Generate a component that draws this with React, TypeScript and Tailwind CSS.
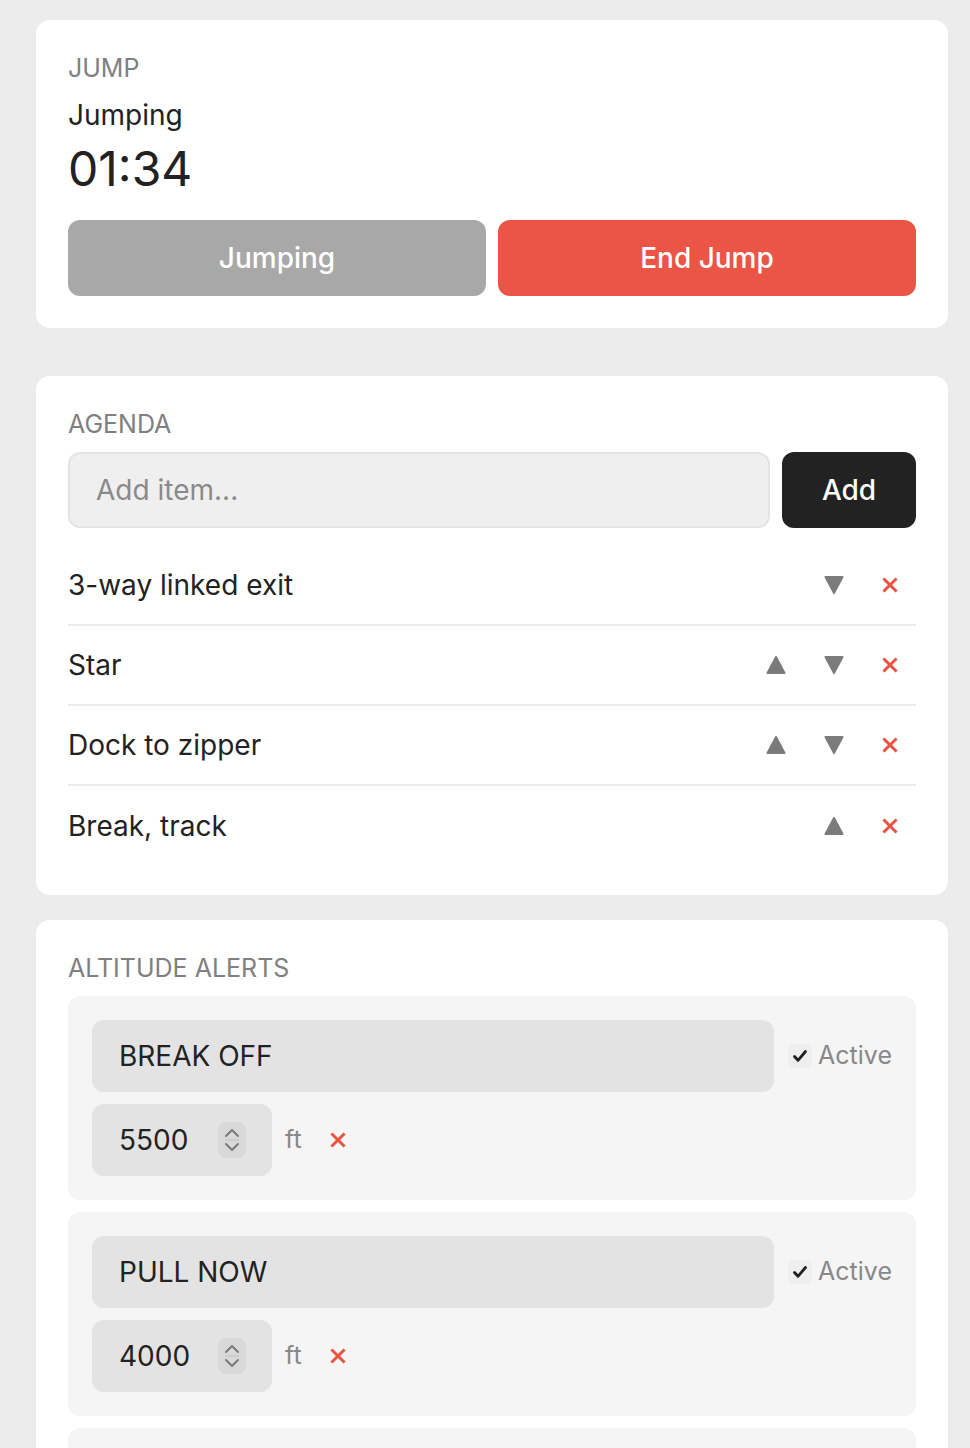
import { useState } from 'react'

const font = { fontFamily: 'Inter, "Noto Sans", "Liberation Sans", sans-serif' }

const initialAgenda = ['3-way linked exit', 'Star', 'Dock to zipper', 'Break, track']

const initialAlerts = [
  { name: 'BREAK OFF', alt: 5500, active: true },
  { name: 'PULL NOW', alt: 4000, active: true },
  { name: 'HARD DECK', alt: 2500, active: true },
]

function Triangle({ up }: { up?: boolean }) {
  return (
    <svg width="20" height="20" viewBox="0 0 20 20">
      <polygon
        points={up ? '10,2 18.5,18 1.5,18' : '1.5,2 18.5,2 10,18'}
        fill="#7b7b7b"
        stroke="#7b7b7b"
        strokeWidth="2"
        strokeLinejoin="round"
      />
    </svg>
  )
}

function Cross({ size = 16 }: { size?: number }) {
  return (
    <svg width={size} height={size} viewBox="0 0 16 16">
      <path d="M2.5 2.5l11 11M13.5 2.5l-11 11" stroke="#e9533f" strokeWidth="3" strokeLinecap="square" />
    </svg>
  )
}

function Spinner() {
  return (
    <div className="flex h-[36px] w-[28px] flex-col items-center justify-center rounded-[8px] bg-[#d9d9d9]">
      <svg width="20" height="30" viewBox="0 0 20 30">
        <path d="M4 11l6-6 6 6" fill="none" stroke="#7a7a7a" strokeWidth="2" strokeLinecap="round" strokeLinejoin="round" />
        <path d="M3 15h14" stroke="#c9c9c9" strokeWidth="1.5" />
        <path d="M4 19l6 6 6-6" fill="none" stroke="#7a7a7a" strokeWidth="2" strokeLinecap="round" strokeLinejoin="round" />
      </svg>
    </div>
  )
}

export default function App() {
  const [agenda] = useState(initialAgenda)
  const [alerts] = useState(initialAlerts)

  return (
    <div className="h-screen overflow-hidden bg-[#ececec] pl-9 pr-[22px] pt-5 text-[#222]" style={font}>
      {/* 跳伞计时 */}
      <section className="rounded-[14px] bg-white px-8 pb-8 pt-[33px]">
        <div className="text-[25px] leading-[31px] text-[#808080]">JUMP</div>
        <div className="mt-[14px] text-[28px] leading-[34px]">Jumping</div>
        <div className="mt-2 text-[48px] leading-[58px]">01:34</div>
        <div className="mt-[22px] grid grid-cols-2 gap-3">
          <button className="h-[76px] rounded-[12px] bg-[#a8a8a8] text-[28px] font-medium text-white">Jumping</button>
          <button className="h-[76px] rounded-[12px] bg-[#eb5546] text-[28px] font-medium text-white">End Jump</button>
        </div>
      </section>

      {/* 议程 */}
      <section className="mt-12 rounded-[14px] bg-white px-8 pb-[29px] pt-[33px]">
        <div className="text-[25px] leading-[31px] text-[#808080]">AGENDA</div>
        <div className="mt-3 flex gap-3">
          <input
            placeholder="Add item..."
            className="h-[76px] min-w-0 flex-1 rounded-[12px] border-2 border-[#e4e4e4] bg-[#efefef] px-[26px] text-[28px] outline-none placeholder:text-[#8a8a8a]"
          />
          <button className="h-[76px] w-[134px] rounded-[12px] bg-[#222] text-[28px] font-medium text-white">Add</button>
        </div>
        <ul className="mt-[18px]">
          {agenda.map((item, i) => (
            <li
              key={item}
              className={
                'flex h-[80px] items-center justify-between ' +
                (i < agenda.length - 1 ? 'border-b-2 border-[#ececec]' : '')
              }
            >
              <span className="text-[28px]">{item}</span>
              <div className="flex items-center gap-[10px] pr-[4px]">
                {i > 0 && (
                  <button className="flex h-12 w-12 items-center justify-center">
                    <Triangle up />
                  </button>
                )}
                {i < agenda.length - 1 && (
                  <button className="flex h-12 w-12 items-center justify-center">
                    <Triangle />
                  </button>
                )}
                <button className="flex h-12 w-[44px] items-center justify-center">
                  <Cross />
                </button>
              </div>
            </li>
          ))}
        </ul>
      </section>

      {/* 高度提醒 */}
      <section className="mt-[25px] rounded-[14px] bg-white px-8 pb-8 pt-[33px]">
        <div className="text-[25px] leading-[31px] text-[#808080]">ALTITUDE ALERTS</div>
        <div className="mt-3 flex flex-col gap-3">
          {alerts.map((a) => (
            <div key={a.name} className="rounded-[12px] bg-[#f5f5f5] p-6">
              <div className="flex items-center gap-[14px]">
                <input
                  defaultValue={a.name}
                  className="h-[72px] min-w-0 flex-1 rounded-[12px] bg-[#e3e3e3] px-[27px] text-[28px] outline-none"
                />
                <label className="flex items-center gap-[6px] text-[25px] text-[#888]">
                  <span className="flex h-[24px] w-[24px] items-center justify-center rounded-[6px] bg-[#eeeeee]">
                    <svg width="20" height="20" viewBox="0 0 20 20">
                      <path d="M4.5 10.5l3.5 3.8L15.5 5.5" fill="none" stroke="#1f1f1f" strokeWidth="2.8" strokeLinecap="round" strokeLinejoin="round" />
                    </svg>
                  </span>
                  Active
                </label>
              </div>
              <div className="mt-3 flex items-center">
                <div className="flex h-[72px] w-[180px] items-center justify-between rounded-[12px] bg-[#e3e3e3] pl-[27px] pr-[26px]">
                  <span className="text-[28px]">{a.alt}</span>
                  <Spinner />
                </div>
                <span className="ml-[13px] text-[25px] text-[#888]">ft</span>
                <button className="ml-[16px] flex h-10 w-10 items-center justify-center">
                  <Cross />
                </button>
              </div>
            </div>
          ))}
        </div>
      </section>
    </div>
  )
}
